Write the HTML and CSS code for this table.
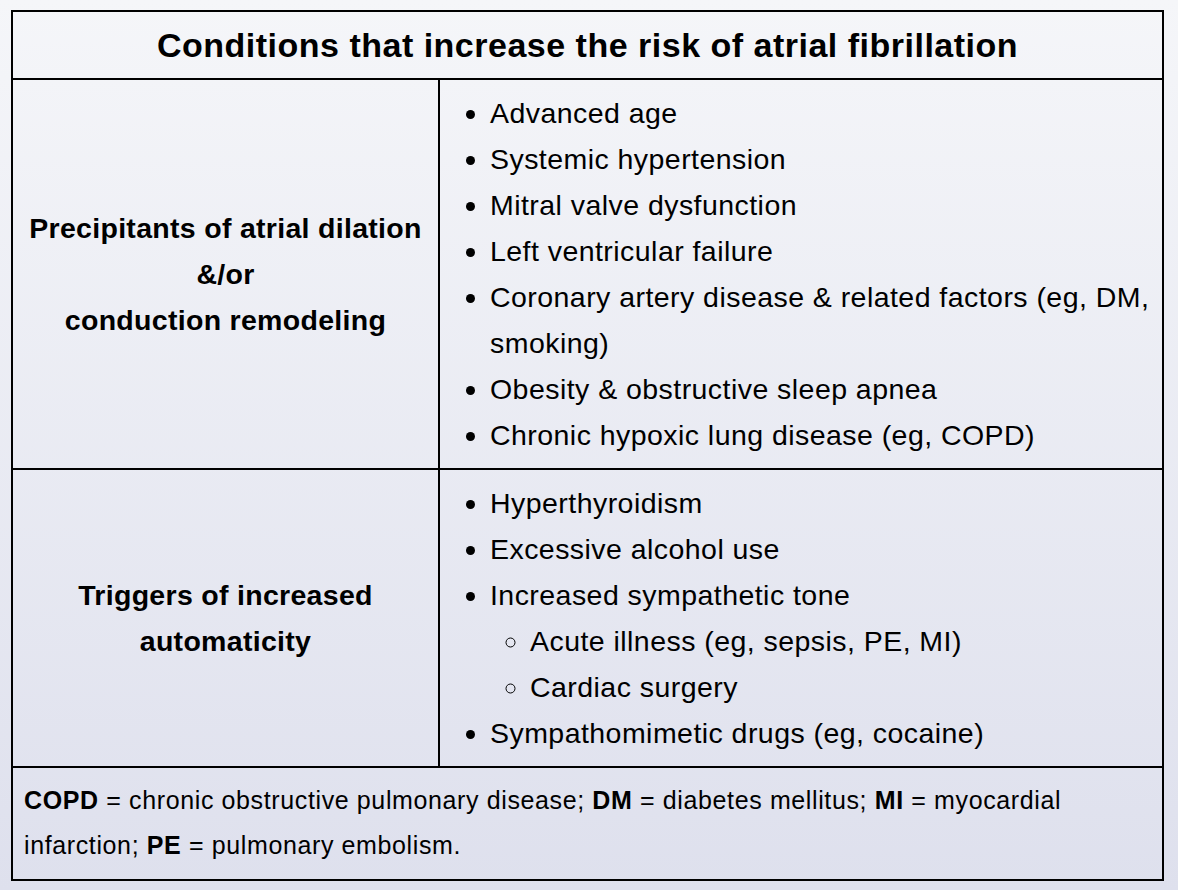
FILE: index.html
```html
<!DOCTYPE html>
<html>
<head>
<meta charset="utf-8">
<link rel="stylesheet" href="styles.css">
</head>
<body>
<table class="risk">
  <thead>
    <tr><th colspan="2" class="title">Conditions that increase the risk of atrial fibrillation</th></tr>
  </thead>
  <tbody>
    <tr class="row1">
      <td class="label">Precipitants of atrial dilation<br>&amp;/or<br>conduction remodeling</td>
      <td class="items">
        <ul>
          <li>Advanced age</li>
          <li>Systemic hypertension</li>
          <li>Mitral valve dysfunction</li>
          <li>Left ventricular failure</li>
          <li>Coronary artery disease &amp; related factors (eg, DM, smoking)</li>
          <li>Obesity &amp; obstructive sleep apnea</li>
          <li>Chronic hypoxic lung disease (eg, COPD)</li>
        </ul>
      </td>
    </tr>
    <tr class="row2">
      <td class="label">Triggers of increased<br>automaticity</td>
      <td class="items">
        <ul>
          <li>Hyperthyroidism</li>
          <li>Excessive alcohol use</li>
          <li>Increased sympathetic tone
            <ul class="sub">
              <li>Acute illness (eg, sepsis, PE, MI)</li>
              <li>Cardiac surgery</li>
            </ul>
          </li>
          <li>Sympathomimetic drugs (eg, cocaine)</li>
        </ul>
      </td>
    </tr>
    <tr>
      <td colspan="2" class="foot"><b>COPD</b> = chronic obstructive pulmonary disease; <b>DM</b> = diabetes mellitus; <b>MI</b> = myocardial infarction; <b>PE</b> = pulmonary embolism.</td>
    </tr>
  </tbody>
</table>
</body>
</html>
```
FILE: styles.css
```css
html {
  min-height: 100%;
  background: linear-gradient(#f5f6f9, #dee0ed);
}
body {
  margin: 0;
  padding: 10px 0 0 11px;
  font-family: "Liberation Sans", Arial, sans-serif;
  color: #000;
}
.risk {
  width: 1153px;
  border-collapse: collapse;
  border: 2px solid #000;
}
.risk th, .risk td {
  border: 2px solid #000;
  padding: 0;
}
.title {
  height: 66px;
  font-size: 34px;
  letter-spacing: 0.5px;
  font-weight: bold;
  text-align: center;
  vertical-align: middle;
}
.label {
  width: 425px;
  font-size: 28.5px;
  letter-spacing: 0.3px;
  font-weight: bold;
  line-height: 46px;
  text-align: center;
  vertical-align: middle;
}
.items {
  font-size: 28.5px;
  letter-spacing: 0.45px;
  line-height: 46px;
  padding: 10px 2px 10px 0 !important;
  vertical-align: top;
}
.items ul {
  margin: 0;
  padding-left: 50px;
  list-style: disc;
}
.items ul.sub {
  padding-left: 40px;
  list-style: circle;
}
.foot {
  font-size: 25px;
  letter-spacing: 0.62px;
  line-height: 45px;
  padding: 10px 10px 11px 11px !important;
}
```
